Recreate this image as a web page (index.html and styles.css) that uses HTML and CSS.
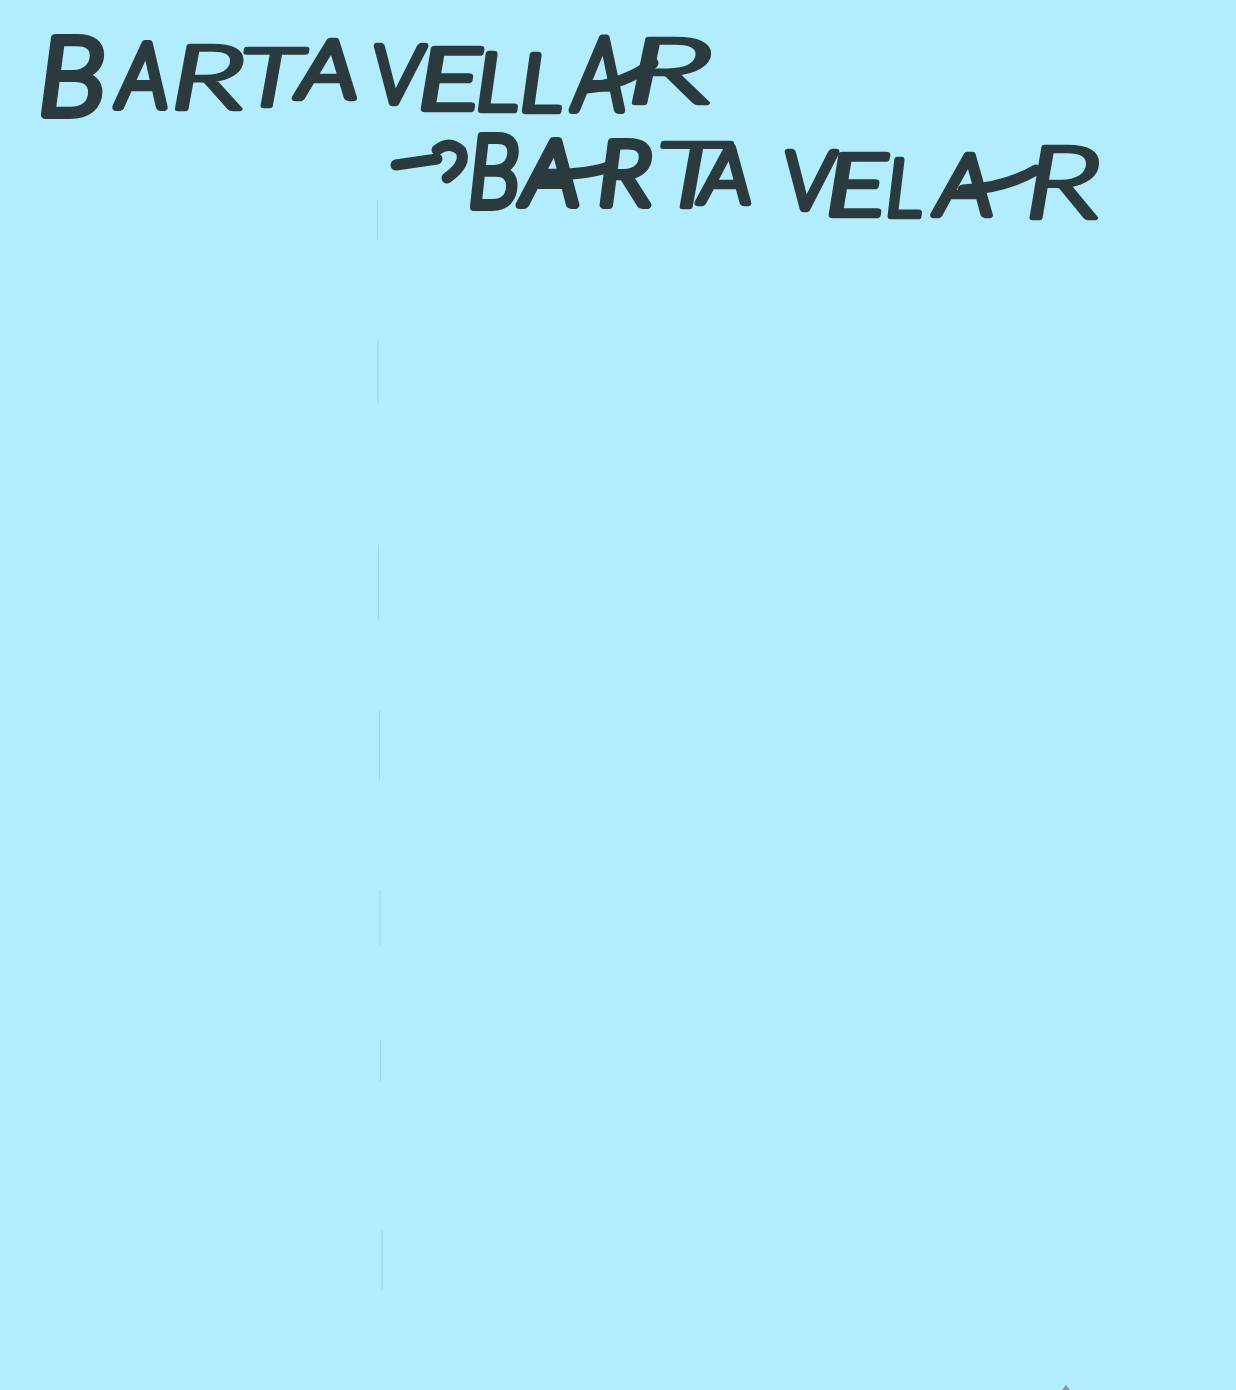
FILE: index.html
```html
<!DOCTYPE html>
<html lang="oc">
<head>
<meta charset="utf-8">
<title>Bartavellar</title>
<link rel="stylesheet" href="styles.css">
</head>
<body>
<svg class="sheet" width="1236" height="1390" viewBox="0 0 1236 1390">
  <g class="fold">
    <path d="M377.5 200V240M378 340V403M378.5 545V620M379.5 710V780M380 890V945M380.5 1040V1082M382 1230V1290"/>
  </g>
  <text class="ink"><tspan x="38" y="115" class="s108 bold" textLength="68" lengthAdjust="spacingAndGlyphs">B</tspan><tspan x="118" y="107" class="s88 bold" textLength="50" lengthAdjust="spacingAndGlyphs">A</tspan><tspan x="170" y="109" class="s88 light" textLength="76" lengthAdjust="spacingAndGlyphs">R</tspan><tspan x="240" y="106" class="s80 light" textLength="62" lengthAdjust="spacingAndGlyphs">T</tspan><tspan x="298" y="98" class="s80" textLength="60" lengthAdjust="spacingAndGlyphs">A</tspan><tspan x="372" y="103" class="s80" textLength="50" lengthAdjust="spacingAndGlyphs">V</tspan><tspan x="418" y="109" class="s85" textLength="62" lengthAdjust="spacingAndGlyphs">E</tspan><tspan x="476" y="110" class="s78" textLength="42" lengthAdjust="spacingAndGlyphs">L</tspan><tspan x="520" y="111" class="s78" textLength="42" lengthAdjust="spacingAndGlyphs">L</tspan><tspan x="574" y="110" class="s100 bold" textLength="52" lengthAdjust="spacingAndGlyphs">A</tspan><tspan x="626" y="103" class="s90 light" textLength="88" lengthAdjust="spacingAndGlyphs">R</tspan></text>
  <path class="pen" d="M587 88Q625 84 653 63M540 174Q585 176 612 166M963 190Q1005 188 1036 170"/>
  <path class="pen" d="M396 165L437 159M437 150Q450 140 461 151Q467 164 447 178"/>
  <text class="ink"><tspan x="468" y="207" class="s100 bold" textLength="52" lengthAdjust="spacingAndGlyphs">B</tspan><tspan x="522" y="205" class="s90 bold" textLength="58" lengthAdjust="spacingAndGlyphs">A</tspan><tspan x="598" y="205" class="s88 bold" textLength="54" lengthAdjust="spacingAndGlyphs">R</tspan><tspan x="656" y="207" class="s90 light" textLength="70" lengthAdjust="spacingAndGlyphs">T</tspan><tspan x="700" y="203" class="s78" textLength="52" lengthAdjust="spacingAndGlyphs">A</tspan><tspan x="783" y="209" class="s80" textLength="50" lengthAdjust="spacingAndGlyphs">V</tspan><tspan x="826" y="215" class="s85" textLength="60" lengthAdjust="spacingAndGlyphs">E</tspan><tspan x="886" y="216" class="s78" textLength="36" lengthAdjust="spacingAndGlyphs">L</tspan><tspan x="936" y="215" class="s85" textLength="58" lengthAdjust="spacingAndGlyphs">A</tspan><tspan x="1024" y="218" class="s100 light" textLength="78" lengthAdjust="spacingAndGlyphs">R</tspan></text>
  <path class="speck" d="M1062 1390L1066 1385L1070 1390Z"/>
</svg>
</body>
</html>
```
FILE: styles.css
```css
html, body {
  margin: 0;
  padding: 0;
  background: #b1ecff;
}

.sheet {
  display: block;
}

.ink {
  font-family: "Lato", "Liberation Sans", sans-serif;
  font-weight: 300;
  font-style: italic;
  fill: #2b3a3d;
  stroke: #2b3a3d;
  stroke-width: 6.5px;
  stroke-linejoin: round;
  stroke-linecap: round;
}

.bold { stroke-width: 8px; }
.light { stroke-width: 4.5px; }

.s78 { font-size: 78px; }
.s80 { font-size: 80px; }
.s85 { font-size: 85px; }
.s88 { font-size: 88px; }
.s90 { font-size: 90px; }
.s100 { font-size: 100px; }
.s108 { font-size: 108px; }

.pen {
  fill: none;
  stroke: #2b3a3d;
  stroke-width: 11px;
  stroke-linecap: round;
  stroke-linejoin: round;
}

.fold path {
  fill: none;
  stroke: #8fc4d6;
  stroke-width: 1px;
  opacity: 0.55;
}

.speck {
  fill: #7f9aa6;
}
```
